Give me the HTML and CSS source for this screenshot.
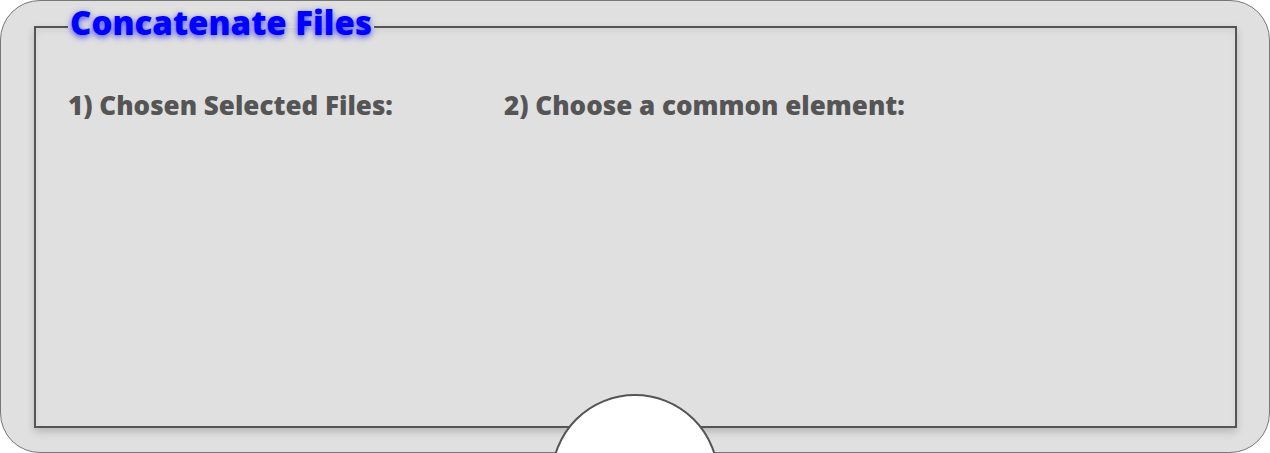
FILE: index.html
```html
<!DOCTYPE html>
<html lang="en">
<head>
    <meta charset="UTF-8">
    <title>Concatenate Files</title>
    <link rel="stylesheet" href="styles.css">
</head>
<body>
    <div class="panel">
        <fieldset class="concat-box">
            <legend>Concatenate Files</legend>
            <div class="steps">
                <div class="step step-files">
                    <h3>1) Chosen Selected Files:</h3>
                    <ul id="file-list"></ul>
                </div>
                <div class="step step-element">
                    <h3>2) Choose a common element:</h3>
                    <div id="element-list"></div>
                </div>
            </div>
        </fieldset>
        <div class="knob"></div>
    </div>
</body>
</html>
```

FILE: styles.css
```css
html, body {
    margin: 0;
    padding: 0;
    overflow: hidden;
    background-color: white;
}
body {
    font-family: "Open Sans", Arial, sans-serif;
}
.panel {
    position: relative;
    width: 1270px;
    height: 453px;
    box-sizing: border-box;
    border: 1px solid #777;
    border-radius: 40px;
    background-color: #e0e0e0;
    padding: 2px 0 0 33px;
}
.concat-box {
    width: 1203px;
    height: 425px;
    box-sizing: border-box;
    margin: 0;
    padding: 0 32px;
    border: 2px solid #555;
    box-shadow: 0 4px 8px rgba(0,0,0,0.18), inset 0 4px 6px rgba(0,0,0,0.05);
}
.concat-box legend {
    padding: 0 2px 8px;
    font-size: 33px;
    line-height: 40px;
    font-weight: 800;
    color: #0000ff;
    text-shadow: 0 2px 6px rgba(0,0,255,0.7);
}
.steps {
    display: flex;
    margin-top: 36px;
}
.step h3 {
    margin: 0;
    font-size: 26px;
    font-weight: 800;
    color: #555;
}
.step ul {
    margin: 0;
    padding: 0;
    list-style: none;
}
.step-files {
    width: 436px;
}
.knob {
    position: absolute;
    left: 550px;
    top: 393px;
    width: 168px;
    height: 168px;
    box-sizing: border-box;
    border: 2px solid #555;
    border-radius: 50%;
    background-color: white;
}
```
